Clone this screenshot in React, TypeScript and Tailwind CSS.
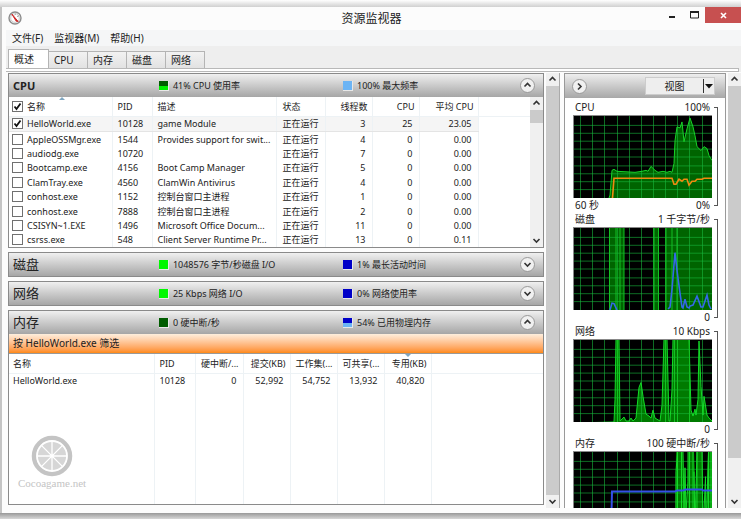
import { useState } from "react"
import type { ReactNode } from "react"

const processes = [
  { name: "HelloWorld.exe", pid: "10128", desc: "game Module", threads: 3, cpu: 25, avg: "23.05" },
  { name: "AppleOSSMgr.exe", pid: "1544", desc: "Provides support for swit...", threads: 4, cpu: 0, avg: "0.00" },
  { name: "audiodg.exe", pid: "10720", desc: "", threads: 7, cpu: 0, avg: "0.00" },
  { name: "Bootcamp.exe", pid: "4156", desc: "Boot Camp Manager", threads: 5, cpu: 0, avg: "0.00" },
  { name: "ClamTray.exe", pid: "4560", desc: "ClamWin Antivirus", threads: 4, cpu: 0, avg: "0.00" },
  { name: "conhost.exe", pid: "1152", desc: "控制台窗口主进程", threads: 1, cpu: 0, avg: "0.00" },
  { name: "conhost.exe", pid: "7888", desc: "控制台窗口主进程", threads: 2, cpu: 0, avg: "0.00" },
  { name: "CSISYN~1.EXE", pid: "1496", desc: "Microsoft Office Docum...", threads: 11, cpu: 0, avg: "0.00" },
  { name: "csrss.exe", pid: "548", desc: "Client Server Runtime Pr...", threads: 13, cpu: 0, avg: "0.11" },
]

const tabs = ["概述", "CPU", "内存", "磁盘", "网络"]
const menus = ["文件(F)", "监视器(M)", "帮助(H)"]

function Chevron({ dir }: { dir: "up" | "down" | "right" }) {
  const d = { up: "M1.5 5.5 4.5 2.5 7.5 5.5", down: "M1.5 3 4.5 6 7.5 3", right: "M3 1.5 6 4.5 3 7.5" }[dir]
  return (
    <svg width="9" height="9" viewBox="0 0 9 9" fill="none" stroke="#333" strokeWidth="1.6">
      <path d={d} />
    </svg>
  )
}

function RoundButton({ dir, label, onClick }: { dir: "up" | "down" | "right"; label: string; onClick?: () => void }) {
  return (
    <button
      type="button"
      aria-label={label}
      onClick={onClick}
      className="flex size-[15px] shrink-0 items-center justify-center rounded-full border border-[#999] bg-[#f0f0f0]"
    >
      <Chevron dir={dir} />
    </button>
  )
}

function Swatch({ top, bottom }: { top: string; bottom: string }) {
  return (
    <svg width="10" height="10" viewBox="0 0 10 10" className="shrink-0">
      <rect width="10" height="10" fill="#e8e8e8" />
      <rect width="9" height="9" fill={bottom} />
      <rect width="9" height="5" fill={top} />
    </svg>
  )
}

type Meter = { text: string; top: string; bottom: string }

function Panel({
  title,
  first,
  second,
  defaultOpen = false,
  className = "",
  children,
}: {
  title: string
  first: Meter
  second: Meter
  defaultOpen?: boolean
  className?: string
  children?: ReactNode
}) {
  const [open, setOpen] = useState(defaultOpen)
  return (
    <section className={`flex flex-col border border-[#8a8a8a] bg-white ${open ? className : ""}`}>
      <div className="flex h-[23px] shrink-0 items-center bg-linear-to-b from-[#f0f0f0] to-[#a6a6a6] pr-2">
        <h2 className={`w-[28.5%] pl-1 ${title === "CPU" ? "text-[11px] font-bold" : "text-[13px]"}`}>{title}</h2>
        <div className="flex w-[35%] items-center gap-1">
          <Swatch top={first.top} bottom={first.bottom} />
          {first.text}
        </div>
        <div className="flex flex-1 items-center gap-1">
          <Swatch top={second.top} bottom={second.bottom} />
          {second.text}
        </div>
        <RoundButton dir={open ? "up" : "down"} label={title} onClick={() => setOpen(!open)} />
      </div>
      {open && children}
    </section>
  )
}

function ScrollBar({ thumb }: { thumb: string }) {
  return (
    <div className="flex w-[13px] shrink-0 flex-col items-center bg-[#f0f0f0]">
      <button type="button" aria-label="向上滚动" className="flex h-[13px] items-center">
        <Chevron dir="up" />
      </button>
      <div className="min-h-0 w-full flex-1">
        <div className={`w-full bg-[#cbcbcb] ${thumb}`} />
      </div>
      <button type="button" aria-label="向下滚动" className="flex h-[13px] items-center">
        <Chevron dir="down" />
      </button>
    </div>
  )
}

function Check({ label, defaultChecked }: { label: string; defaultChecked?: boolean }) {
  return (
    <span className="relative block size-[11px]">
      <input
        type="checkbox"
        aria-label={label}
        defaultChecked={defaultChecked}
        className="peer block size-[11px] appearance-none border border-[#707070] bg-white"
      />
      <svg
        viewBox="0 0 11 11"
        className="pointer-events-none absolute inset-0 hidden peer-checked:block"
        fill="none"
        stroke="#111"
        strokeWidth="1.8"
      >
        <path d="M2.5 5.5 4.5 8 8.5 2.5" />
      </svg>
    </span>
  )
}

function CpuTable() {
  const line = "border-r border-[#edf2f5]"
  return (
    <div className="flex h-[150px]">
      <table className="h-full min-w-0 flex-1 table-fixed border-collapse text-left whitespace-nowrap">
        <colgroup>
          <col className="w-[18px]" />
          <col className="w-[85px]" />
          <col className="w-10" />
          <col className="w-[124px]" />
          <col className="w-[49px]" />
          <col className="w-[47px]" />
          <col className="w-[47px]" />
          <col className="w-[59px]" />
          <col />
        </colgroup>
        <thead>
          <tr className="h-[19px] border-b border-[#edf2f5]">
            <th className="pl-[3px]">
              <Check label="全选" defaultChecked />
            </th>
            <th className={`relative font-normal ${line}`}>
              名称
              <svg width="6" height="3" viewBox="0 0 6 3" className="absolute top-0 left-8">
                <path d="M0 3 3 0 6 3Z" fill="#7fa6c0" />
              </svg>
            </th>
            <th className={`pl-[5px] font-normal ${line}`}>PID</th>
            <th className={`pl-[5px] font-normal ${line}`}>描述</th>
            <th className={`pl-[6px] font-normal ${line}`}>状态</th>
            <th className={`pr-1 text-right font-normal ${line}`}>线程数</th>
            <th className={`pr-1 text-right font-normal ${line}`}>CPU</th>
            <th className={`pr-1 text-right font-normal ${line}`}>平均 CPU</th>
            <th />
          </tr>
        </thead>
        <tbody>
          {processes.map((p, idx) => {
            const bg = idx === 0 ? "bg-[#f5f5f5] border-b border-b-[#e4e4e4]" : ""
            return (
              <tr key={p.pid}>
                <td className={`pl-[3px] ${bg}`}>
                  <Check label={p.name} defaultChecked={idx === 0} />
                </td>
                <td className={`${line} ${bg}`}>{p.name}</td>
                <td className={`pl-[5px] ${line} ${bg}`}>{p.pid}</td>
                <td className={`overflow-hidden pl-[5px] ${line} ${bg}`}>{p.desc}</td>
                <td className={`pl-[6px] ${line} ${bg}`}>正在运行</td>
                <td className={`pr-[6px] text-right ${line} ${bg}`}>{p.threads}</td>
                <td className={`pr-[6px] text-right ${line} ${bg}`}>{p.cpu}</td>
                <td className={`pr-[6px] text-right ${line} ${bg}`}>{p.avg}</td>
                <td />
              </tr>
            )
          })}
        </tbody>
      </table>
      <ScrollBar thumb="h-[13px]" />
    </div>
  )
}

function MemoryTable() {
  const line = "border-r border-[#edf2f5]"
  const heads = ["硬中断/...", "提交(KB)", "工作集(...", "可共享(...", "专用(KB)"]
  const values = ["0", "52,992", "54,752", "13,932", "40,820"]
  return (
    <table className="h-full w-full table-fixed border-collapse text-left whitespace-nowrap">
      <colgroup>
        <col className="w-[145px]" />
        <col className="w-[41px]" />
        <col className="w-12" />
        <col className="w-[47px]" />
        <col className="w-[47px]" />
        <col className="w-[47px]" />
        <col className="w-[47px]" />
        <col />
      </colgroup>
      <thead>
        <tr className="h-[19px] border-b border-[#edf2f5]">
          <th className={`pl-1 font-normal ${line}`}>名称</th>
          <th className={`pl-[5px] font-normal ${line}`}>PID</th>
          {heads.map((h) => (
            <th key={h} className={`relative pr-1 text-right font-normal ${line}`}>
              {h}
              {h === "专用(KB)" && (
                <svg width="6" height="3" viewBox="0 0 6 3" className="absolute top-0 left-5">
                  <path d="M0 0 3 3 6 0Z" fill="#7fa6c0" />
                </svg>
              )}
            </th>
          ))}
          <th />
        </tr>
      </thead>
      <tbody>
        <tr className="h-[15px]">
          <td className={`pl-1 ${line}`}>HelloWorld.exe</td>
          <td className={`pl-[5px] ${line}`}>10128</td>
          {values.map((v) => (
            <td key={v} className={`pr-[6px] text-right ${line}`}>
              {v}
            </td>
          ))}
          <td />
        </tr>
        {/* filler row carries the column lines to the bottom */}
        <tr className="h-full">
          {[0, 1, 2, 3, 4, 5, 6].map((i) => (
            <td key={i} className={line} />
          ))}
          <td />
        </tr>
      </tbody>
    </table>
  )
}

const gridX = [6, 18, 30, 43, 55, 67, 79, 91, 103, 115, 128]
const gridY = [9, 17, 25, 33, 41, 50, 58, 66, 74]

function Graph({ title, max, left, min, children }: { title: string; max: string; left?: string; min?: string; children: ReactNode }) {
  return (
    <div className="flex shrink-0 text-[10px] leading-[14px]">
      <div className="min-w-0 flex-1">
        <div className="flex h-[15px] justify-between px-0.5">
          <span>{title}</span>
          <span>{max}</span>
        </div>
        <svg viewBox="0 0 138 83" preserveAspectRatio="none" className="block h-[83px] w-full border-t border-l border-[#888] bg-black">
          {children}
        </svg>
        <div className="flex h-[14px] justify-between px-0.5">
          <span>{left}</span>
          <span>{min}</span>
        </div>
      </div>
      <div className="mt-[7px] mb-[6px] ml-0.5 w-1 border-y border-r border-[#555]" />
    </div>
  )
}

function GridLines() {
  return (
    <g stroke="#18b83c" strokeOpacity="0.6" strokeWidth="1">
      {gridX.map((x) => (
        <path key={x} d={`M${x + 0.5} 0V83`} />
      ))}
      {gridY.map((y) => (
        <path key={y} d={`M0 ${y + 0.5}H138`} />
      ))}
    </g>
  )
}

function CpuGraph() {
  const pts =
    "35,83 36,80 38,55 40,54 43,56 61,57 68,56 72,55 74,56 77,51 81,55 84,57 89,56 93,57 96,56 98,57 100,48 101,25 103,11 106,12 108,6 110,26 113,13 116,2 119,11 121,20 123,31 127,35 130,31 133,33 135,40 138,45"
  return (
    <>
      <polygon points={`${pts} 138,83`} fill="#006400" />
      <GridLines />
      <polyline points={pts} fill="none" stroke="#18d428" />
      <polyline
        points="38.5,83 40,63 98,63 100,69 102,69 105,64 108,66 110,64 113,64 115,70 118,66 121,66 123,64 128,64 130,63 138,63"
        fill="none"
        stroke="#f08a10"
        strokeWidth="1.6"
      />
    </>
  )
}

function DiskGraph() {
  return (
    <>
      <path d="M35 0H50V83H35ZM79 0H85V83H79ZM91 0H138V83H91Z" fill="#006400" />
      <GridLines />
      <path d="M35.5 0V83M42 0V83M46 0V83M50 0V83M80 0V83M84.5 0V83M92 0V83M98 0V83M103 0V83" stroke="#12c222" />
      <path
        d="M36 83 38 76 40 76.5 43 83M94 82 96 80 98 62 101 25 103 43 106 66 108 80 109 81 111 72 113 80 115 81 116 79 119 78 123 69 127 80 129 80 133 68 135 78 137 82"
        fill="none"
        stroke="#3468e8"
        strokeWidth="1.6"
      />
    </>
  )
}

function NetworkGraph() {
  const pts =
    "0,84 40,83 41,60 42,-1 45,-1 46,82 48,80 50,78 52,82 55,82 57,79 59,82 62,79 65,48 67,43 69,57 72,75 75,77 77,79 79,71 81,79 86,82 88,66 90,-1 93,-1 95,82 96,82 98,50 99,-1 115,-1 117,71 119,77 121,70 122,76 124,60 125,1 127,47 129,76 130,57 133,76 135,79 138,82"
  return (
    <>
      <polygon points={`${pts} 138,83`} fill="#007a00" />
      <GridLines />
      <polyline points={pts} fill="none" stroke="#14dc28" />
      <path d="M43.5 0V83M91.5 0V83M100.5 0V83M103.5 0V83M115.5 0V83" stroke="#12c222" />
    </>
  )
}

function MemoryGraph() {
  return (
    <>
      <path
        d="M101 83 102 0H109L110 40 111 16 112 50 113 83 114 0H120L121 20 122 60 123 0H128L130 83 131 30 132 70 134 0H138V83Z"
        fill="#007a00"
      />
      <GridLines />
      <path
        d="M102 83V20L103.5 0V83M107.5 0V83M109 0 110 60 111 16 112 60 114 30V0M115.5 0V83M119 0V83M120 20 121 83 122 40 123 0V83M128 0 129 83 131.5 25 132 83 134.5 0V83M137 0V83"
        fill="none"
        stroke="#14dc28"
      />
      <polyline points="37,83 38,40 101,40 103,39 109,39 111,38 128,38 129,39 138,39" fill="none" stroke="#3450e8" strokeWidth="2" />
    </>
  )
}

function Watermark() {
  return (
    <div className="pointer-events-none absolute bottom-[19px] left-2.5 flex flex-col items-center font-['Liberation_Serif',serif] text-[11px] leading-3 text-[#c4c4c4]">
      <svg width="42" height="42" viewBox="0 0 42 42">
        <circle cx="21" cy="21" r="18" fill="#d6d6d6" stroke="#c4c4c4" strokeWidth="4.5" />
        <circle cx="21" cy="21" r="15" fill="none" stroke="#fff" strokeWidth="1.8" />
        <path d="M21 6V36M6 21H36M10.4 10.4 31.6 31.6M31.6 10.4 10.4 31.6" stroke="#fff" strokeWidth="1.3" />
      </svg>
      Cocoagame.net
    </div>
  )
}

export default function App() {
  const [active, setActive] = useState("概述")

  return (
    <div className="flex h-screen flex-col overflow-hidden bg-[#c4c4c4] font-['Noto_Sans','Noto_Sans_CJK_SC',sans-serif] text-[9px] leading-[13px] text-[#222]">
      {/* Window shadow */}
      <div className="h-[7px] shrink-0 bg-linear-to-b from-white to-[#d0d0d0]" />
      <div className="ml-0.5 flex min-h-0 flex-1 flex-col bg-[#fcfcfc]">
        {/* Title bar */}
        <header className="relative flex h-[23px] shrink-0 items-center justify-center">
          <svg width="14" height="14" viewBox="0 0 14 14" className="absolute top-1 left-1.5">
            <circle cx="7" cy="7" r="6" fill="#f1f1f1" stroke="#8c8c8c" strokeWidth="1.4" />
            <circle cx="7" cy="7" r="4.3" fill="#fff" stroke="#bbb" strokeWidth="0.7" />
            <path d="M3.8 3 10.2 10.5 8.2 10.2Z" fill="#c22" stroke="#c22" strokeWidth="0.9" />
            <path d="M6.5 4 8 2.8M9 5.5 10.8 5" stroke="#777" strokeWidth="0.7" />
          </svg>
          <h1 className="text-xs">资源监视器</h1>
          <div className="absolute top-0 right-0 flex h-4 items-center">
            <button type="button" aria-label="最小化" className="flex h-full w-[22px] items-center justify-center">
              <svg width="8" height="8" viewBox="0 0 8 8">
                <path d="M1 6H7" stroke="#222" strokeWidth="2" />
              </svg>
            </button>
            <button type="button" aria-label="最大化" className="flex h-full w-[22px] items-center justify-center">
              <svg width="9" height="8" viewBox="0 0 9 8">
                <path d="M0.5 1H8.5V7H0.5Z" fill="none" stroke="#222" />
                <path d="M0 1H9" stroke="#222" strokeWidth="2" />
              </svg>
            </button>
            <button type="button" aria-label="关闭" className="flex h-full w-9 items-center justify-center bg-[#c75050]">
              <svg width="7" height="7" viewBox="0 0 7 7">
                <path d="M1 1 6 6M6 1 1 6" stroke="#fff" strokeWidth="1.6" />
              </svg>
            </button>
          </div>
        </header>

        {/* Menu bar */}
        <nav className="ml-1 flex h-4 shrink-0 items-center gap-[11px] bg-[#f5f6f7] pl-1.5 text-[10px]">
          {menus.map((m) => (
            <button key={m} type="button">
              {m}
            </button>
          ))}
        </nav>

        {/* Tabs */}
        <div className="ml-1 shrink-0 bg-[#eee] pt-[3px]">
          <div role="tablist" className="flex items-end pl-0.5 text-[10px]">
            {tabs.map((tab) => (
              <button
                key={tab}
                type="button"
                role="tab"
                aria-selected={tab === active}
                onClick={() => setActive(tab)}
                className={`border border-b-0 border-[#b4b4b4] pl-[5px] text-left ${
                  tab === active ? "h-[19px] w-[41px] bg-white" : "-ml-px h-[17px] w-10 bg-linear-to-b from-[#f2f2f2] to-[#e2e2e2]"
                }`}
              >
                {tab}
              </button>
            ))}
          </div>
          <div className="mr-0.5 h-1 border-y border-r border-[#b8b8b8] bg-white" />
        </div>

        {/* Body */}
        <main className="flex min-h-0 flex-1 pt-[1px] pb-[5px] pl-1.5">
          <div className="relative flex min-w-0 flex-1 flex-col gap-[4px] pb-[3px]">
            <Panel
              title="CPU"
              defaultOpen
              first={{ text: "41% CPU 使用率", top: "#005c00", bottom: "#00f000" }}
              second={{ text: "100% 最大频率", top: "#6cb4f4", bottom: "#6cb4f4" }}
            >
              <CpuTable />
            </Panel>
            <Panel
              title="磁盘"
              first={{ text: "1048576 字节/秒磁盘 I/O", top: "#00f800", bottom: "#00f800" }}
              second={{ text: "1% 最长活动时间", top: "#0000c8", bottom: "#0000c8" }}
            />
            <Panel
              title="网络"
              first={{ text: "25 Kbps 网络 I/O", top: "#00f800", bottom: "#00f800" }}
              second={{ text: "0% 网络使用率", top: "#0000c8", bottom: "#0000c8" }}
            />
            <Panel
              title="内存"
              defaultOpen
              className="min-h-0 flex-1"
              first={{ text: "0 硬中断/秒", top: "#005c00", bottom: "#005c00" }}
              second={{ text: "54% 已用物理内存", top: "#0000c8", bottom: "#6cb4f4" }}
            >
              <div className="flex h-5 shrink-0 items-center border-b border-[#999] bg-linear-to-b from-[#fdeedd] to-[#ff8a10] pl-1 text-[10px]">
                按 HelloWorld.exe 筛选
              </div>
              <div className="min-h-0 flex-1">
                <MemoryTable />
              </div>
            </Panel>
            <Watermark />
          </div>
          <div className="ml-0.5 flex">
            <ScrollBar thumb="h-full" />
          </div>

          <div className="flex shrink-0 gap-0.5 border-l border-[#aaa]">
            <aside className="ml-1 flex w-[162px] flex-col overflow-hidden border border-b-0 border-[#999] bg-white">
              <div className="flex h-6 shrink-0 items-center justify-between bg-linear-to-b from-[#eee] to-[#a8a8a8] pr-2.5 pl-[7px]">
                <RoundButton dir="right" label="折叠" />
                <button type="button" className="flex h-[18px] w-[70px] items-center border border-[#ccc] bg-[#eee] text-[10px]">
                  <span className="flex-1">视图</span>
                  <span className="flex h-[14px] w-[11px] items-center justify-center border-l border-[#333]">
                    <svg width="8" height="5" viewBox="0 0 8 5">
                      <path d="M0 0H8L4 4.5Z" fill="#111" />
                    </svg>
                  </span>
                </button>
              </div>
              <div className="flex min-h-0 flex-1 flex-col overflow-hidden pt-[2px] pr-[7px] pl-2">
                <Graph title="CPU" max="100%" left="60 秒" min="0%">
                  <CpuGraph />
                </Graph>
                <Graph title="磁盘" max="1 千字节/秒" min="0">
                  <DiskGraph />
                </Graph>
                <Graph title="网络" max="10 Kbps" min="0">
                  <NetworkGraph />
                </Graph>
                <Graph title="内存" max="100 硬中断/秒">
                  <MemoryGraph />
                </Graph>
              </div>
            </aside>
            <ScrollBar thumb="h-[91%]" />
          </div>
        </main>
      </div>
      <div className="h-[6px] shrink-0 bg-linear-to-b from-[#999] to-[#d8d8d8]" />
    </div>
  )
}
